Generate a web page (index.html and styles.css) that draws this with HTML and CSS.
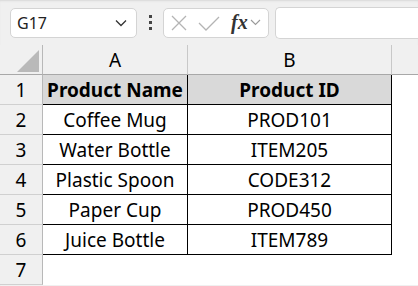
FILE: index.html
```html
<!DOCTYPE html>
<html lang="en">

<head>
    <meta charset="UTF-8">
    <title>Sheet</title>
    <link rel="stylesheet" href="styles.css">
</head>

<body>
    <div class="toolbar">
        <div class="name-box">
            <span>G17</span>
            <svg width="12" height="8" viewBox="0 0 12 8"><path d="M1 1.5 L6 6.5 L11 1.5" fill="none" stroke="#333" stroke-width="1.3"/></svg>
        </div>
        <div class="dots"><i></i><i></i><i></i></div>
        <div class="fx-box">
            <svg width="16" height="16" viewBox="0 0 16 16"><path d="M1 1 L15 15 M15 1 L1 15" stroke="#b4b4b4" stroke-width="1.3"/></svg>
            <svg width="22" height="16" viewBox="0 0 22 16"><path d="M1 8 L8 15 L21 2" fill="none" stroke="#b4b4b4" stroke-width="1.3"/></svg>
            <span class="fx">fx</span>
            <svg width="11" height="7" viewBox="0 0 11 7"><path d="M1 1 L5.5 5.5 L10 1" fill="none" stroke="#9a9a9a" stroke-width="1.1"/></svg>
        </div>
        <div class="formula"></div>
    </div>

    <div class="sheet">
        <div class="corner"><div class="tri"></div></div>
        <div class="col-head">A</div>
        <div class="col-head">B</div>
        <div class="col-head last"></div>

        <div class="row-head">1</div>
        <div class="cell title">Product Name</div>
        <div class="cell title">Product ID</div>
        <div class="empty"></div>

        <div class="row-head">2</div>
        <div class="cell">Coffee Mug</div>
        <div class="cell">PROD101</div>
        <div class="empty"></div>

        <div class="row-head">3</div>
        <div class="cell">Water Bottle</div>
        <div class="cell">ITEM205</div>
        <div class="empty"></div>

        <div class="row-head">4</div>
        <div class="cell">Plastic Spoon</div>
        <div class="cell">CODE312</div>
        <div class="empty"></div>

        <div class="row-head">5</div>
        <div class="cell">Paper Cup</div>
        <div class="cell">PROD450</div>
        <div class="empty"></div>

        <div class="row-head">6</div>
        <div class="cell">Juice Bottle</div>
        <div class="cell">ITEM789</div>
        <div class="empty"></div>

        <div class="row-head">7</div>
        <div class="empty"></div>
        <div class="empty"></div>
        <div class="empty"></div>
    </div>
</body>

</html>
```

FILE: styles.css
```css
body {
    margin: 0;
    width: 418px;
    height: 286px;
    overflow: hidden;
    background-color: #f0f0f0;
    font-family: "Noto Sans", Arial, sans-serif;
    box-shadow: inset 0 2px 2px -1px #d8d8d8;
}

.toolbar {
    display: flex;
    align-items: center;
    height: 45px;
    padding: 0 0 0 10px;
}

.name-box {
    display: flex;
    align-items: center;
    justify-content: space-between;
    box-sizing: border-box;
    width: 127px;
    height: 30px;
    padding: 0 9px 0 6px;
    background-color: #fff;
    border: 1px solid #d4d4d4;
    border-radius: 5px;
    font-size: 16px;
    color: #222;
}

.dots {
    display: flex;
    flex-direction: column;
    gap: 3px;
    margin: 0 11px 0 12px;
}

.dots i {
    width: 3px;
    height: 3px;
    background-color: #444;
}

.fx-box {
    display: flex;
    align-items: center;
    box-sizing: border-box;
    width: 106px;
    height: 30px;
    padding: 0 3px 0 7px;
    background-color: #fff;
    border: 1px solid #d4d4d4;
    border-radius: 5px;
    gap: 11px;
}

.fx {
    font-family: "Liberation Serif", serif;
    font-style: italic;
    font-weight: bold;
    font-size: 20px;
    color: #333;
    margin-right: -9px;
}

.formula {
    flex: 1;
    height: 30px;
    margin-left: 6px;
    background-color: #fff;
    border: 1px solid #d4d4d4;
    border-right: none;
    border-radius: 5px 0 0 5px;
}

.sheet {
    display: grid;
    grid-template-columns: 43px 145px 204px 1fr;
    grid-template-rows: repeat(8, 30px);
    background-color: #fff;
    font-size: 19px;
    color: #000;
}

.corner {
    position: relative;
    background-color: #f0f0f0;
    border-right: 1px solid #b8b8b8;
    border-bottom: 1px solid #a8a8a8;
}

.tri {
    position: absolute;
    right: 3px;
    bottom: 2px;
    width: 0;
    height: 0;
    border-left: 22px solid transparent;
    border-bottom: 22px solid #b9b9b9;
}

.col-head {
    display: flex;
    align-items: center;
    justify-content: center;
    background-color: #f0f0f0;
    border-right: 1px solid #c8c8c8;
    border-bottom: 1px solid #a8a8a8;
}

.col-head.last {
    border-right: none;
}

.row-head {
    display: flex;
    align-items: center;
    justify-content: center;
    background-color: #f0f0f0;
    border-right: 1px solid #b8b8b8;
    border-bottom: 1px solid #d0d0d0;
}

.cell {
    display: flex;
    align-items: center;
    justify-content: center;
    border-right: 1px solid #000;
    border-bottom: 1px solid #000;
    white-space: nowrap;
}

.cell.title {
    background-color: #d9d9d9;
    font-weight: bold;
}

.empty {
    background-color: #fff;
}
```
